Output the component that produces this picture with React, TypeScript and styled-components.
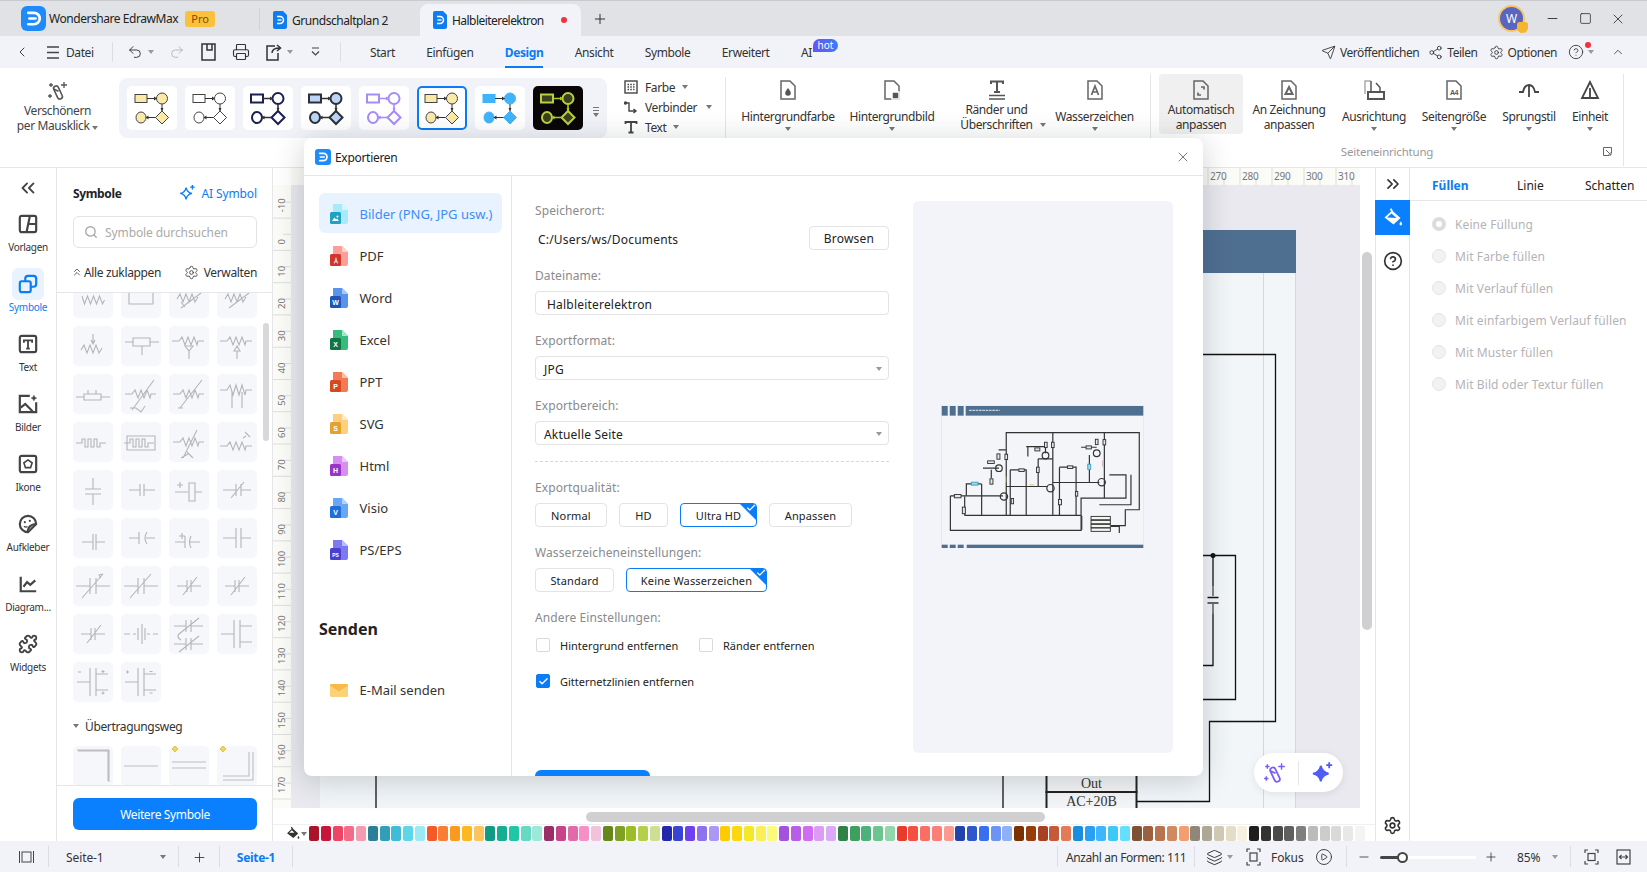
import React from "react";
import styled, { createGlobalStyle } from "styled-components";
import { ChevronLeft, Undo2, Redo2, Printer, Send, Share2, Settings, CircleHelp, ChevronUp, Minus, Square, X, Plus, Search, Layers, ChevronsLeft, ChevronsRight, ChevronsUp, Check, Puzzle, CirclePlay } from "lucide-react";

const Global = createGlobalStyle`
  html, body { margin: 0; padding: 0; overflow: hidden; background: #fff; }
  body { font-family: "Noto Sans", "Open Sans", sans-serif; font-size: 12px; color: #222; }
  * { box-sizing: border-box; }
`;

const Page = styled.div`
  position: relative; width: 1647px; height: 872px; overflow: hidden;
  display: flex; flex-direction: column; background: #fff;
`;

/* ---------- Title bar ---------- */
const TitleBar = styled.header`
  height: 36px; flex: none; display: flex; align-items: center; background: #e1e2e6; padding-left: 21px;
  border-top: 1px solid #c9cacd;
`;
const AppBlock = styled.div`
  width: 239px; height: 22px; display: flex; align-items: center; border-right: 1px solid #d2d3d7;
`;
const AppName = styled.span`margin-left: 3px; white-space: nowrap; letter-spacing: -0.45px;`;
const ProBadge = styled.span`
  margin-left: 7px; width: 30px; height: 16px; border-radius: 3px; background: #fbc13c; color: #7a4e00;
  font-size: 11px; line-height: 16px; text-align: center;
`;
const DocTab = styled.div<{ $active?: boolean }>`
  height: 32px; margin-top: 3px; display: flex; align-items: center; gap: 5px; padding: 0 13px;
  width: ${p => (p.$active ? "161px" : "160px")};
  background: ${p => (p.$active ? "#f1f3f9" : "transparent")};
  border-radius: 8px 8px 0 0; white-space: nowrap;
  letter-spacing: ${p => (p.$active ? "-0.55px" : "-0.45px")};
`;
const UnsavedDot = styled.span`
  width: 6px; height: 6px; border-radius: 50%; background: #f0323c; margin-left: auto; margin-right: 1px;
`;
const NewTab = styled.div`margin-left: 11px; display: flex; color: #333;`;
const WindowArea = styled.div`
  margin-left: auto; display: flex; align-items: center; color: #333;
`;
const Avatar = styled.div`
  position: relative; width: 27px; height: 27px; border-radius: 50%; background: #5965c0; border: 2px solid #f6c766;
  color: #fff; font-size: 12px; display: flex; align-items: center; justify-content: center;
`;
const AvatarBadge = styled.span`
  position: absolute; right: -5px; bottom: -3px; width: 11px; height: 11px; background: #f5b62f; border-radius: 3px 3px 6px 6px;
`;
const WinBtn = styled.span<{ $ml: number }>`display: flex; margin-left: ${p => p.$ml}px;`;

/* ---------- Menu bar ---------- */
const MenuBar = styled.nav`
  height: 32px; flex: none; display: flex; align-items: center; background: #f1f3f9; color: #333;
`;
const QuickArea = styled.div`
  width: 343px; height: 100%; display: flex; align-items: center; padding-left: 14px; position: relative; letter-spacing: -0.4px;
`;
const QuickItem = styled.span<{ $ml?: number; $dim?: boolean }>`
  display: flex; align-items: center; margin-left: ${p => p.$ml ?? 0}px; color: ${p => (p.$dim ? "#b5b5b8" : "#333")}; white-space: nowrap;
`;
const VSep = styled.span<{ $ml: number; $h?: number }>`
  width: 1px; height: ${p => p.$h ?? 20}px; background: #dcdde2; margin-left: ${p => p.$ml}px; flex: none;
`;
const Caret = styled.span<{ $ml?: number; $c?: string }>`
  display: inline-block; width: 0; height: 0; border-left: 3px solid transparent; border-right: 3px solid transparent;
  border-top: 4px solid ${p => p.$c ?? "#777"}; margin-left: ${p => p.$ml ?? 0}px; flex: none;
`;
const MenuTabs = styled.div`
  height: 100%; display: flex; gap: 31.4px; padding-left: 27px; position: relative;
`;
const MenuTab = styled.div<{ $active?: boolean }>`
  position: relative; height: 100%; display: flex; align-items: center; white-space: nowrap; letter-spacing: -0.4px;
  color: ${p => (p.$active ? "#0a7cf5" : "#333")}; font-weight: ${p => (p.$active ? 700 : 400)};
  border-bottom: 2px solid ${p => (p.$active ? "#0a7cf5" : "transparent")}; border-top: 2px solid transparent;
`;
const HotBadge = styled.span`
  position: absolute; left: 12px; top: 1px; width: 25px; height: 13px; border-radius: 7px 7px 7px 0;
  background: linear-gradient(90deg, #6a52f5, #3a7cfb); color: #fff; font-size: 10px; line-height: 12px; text-align: center; letter-spacing: 0;
`;
const MenuRight = styled.div`
  margin-left: auto; display: flex; align-items: center; padding-right: 22px; white-space: nowrap; letter-spacing: -0.45px;
`;
const MenuAction = styled.span<{ $ml: number }>`
  display: flex; align-items: center; gap: 4px; margin-left: ${p => p.$ml}px; position: relative;
`;
const RedDot = styled.span`
  position: absolute; left: 17px; top: -2px; width: 6px; height: 6px; border-radius: 50%; background: #f0323c;
`;

/* ---------- Ribbon ---------- */
const Ribbon = styled.section`
  height: 100px; flex: none; display: flex; background: #fff; border-bottom: 1px solid #e6e6e8; color: #333;
  letter-spacing: -0.4px;
`;
const MagicButton = styled.div`
  width: 119px; display: flex; flex-direction: column; align-items: center; padding: 12px 4px 0 0; color: #444;
  text-align: center; line-height: 15px;
  & > svg { margin-bottom: 1px; }
`;
const Gallery = styled.div`
  width: 488px; height: 60px; margin-top: 10px; padding: 8px 0 0 8px; display: flex; gap: 8px;
  background: #f1f3f9; border-radius: 8px; position: relative;
`;
const ThumbBox = styled.div<{ $selected?: boolean; $bg: string }>`
  width: 50px; height: 44px; border-radius: 5px; background: ${p => p.$bg}; overflow: hidden; flex: none;
  box-shadow: ${p => (p.$selected ? "inset 0 0 0 2px #0a7cf5" : "none")};
  & > svg { display: block; }
`;
const GalleryMore = styled.div`
  width: 10px; display: flex; flex-direction: column; align-items: center; justify-content: center; gap: 2px;
`;
const GalleryBar = styled.span`width: 6px; height: 1px; background: #777;`;
const QuickList = styled.div`
  width: 119px; padding: 0 0 0 17px; display: flex; flex-direction: column; border-right: 1px solid #e6e6e8; height: 61px; margin-top: 9px;
`;
const QuickRow = styled.div`
  height: 20px; flex: none; display: flex; align-items: center; gap: 7px; white-space: nowrap; color: #333;
`;
const RibbonGroupA = styled.div`
  width: 424px; display: flex; padding: 6px 0 0 11px; height: 66px;
`;
const RibbonGroupB = styled.div`
  width: 474px; height: 92px; border-left: 1px solid #e6e6e8; border-right: 1px solid #e6e6e8;
  margin-top: 6px; display: flex; flex-direction: column; padding-left: 8px;
`;
const RibbonRow = styled.div`display: flex; height: 60px;`;
const RibbonItem = styled.div<{ $w: number; $hl?: boolean }>`
  width: ${p => p.$w}px; height: 60px; border-radius: 4px; background: ${p => (p.$hl ? "#f0f0f0" : "transparent")};
  display: flex; flex-direction: column; align-items: center; text-align: center; padding-top: 6px; flex: none; line-height: 15px;
  position: relative;
`;
const RibbonIconBox = styled.div`height: 20px; display: flex; align-items: center; justify-content: center; margin-bottom: 2px;`;
const RibbonLabel = styled.div<{ $two: boolean }>`
  height: 30px; display: flex; flex-direction: column; justify-content: center; align-items: center; white-space: nowrap;
  padding-bottom: ${p => (p.$two ? 0 : 2)}px;
`;
const RibbonCaret = styled.span`
  margin-top: -5px; display: flex;
`;
const SideCaret = styled.span`
  position: absolute; right: 2px; bottom: 7px; display: flex;
`;
const RibbonFooter = styled.div`
  display: grid; grid-template-columns: 1fr auto 1fr; align-items: center; height: 18px; margin-top: 8px; color: #999; font-size: 11.5px; margin-left: -8px; letter-spacing: -0.2px;
`;
const FooterLabel = styled.span`grid-column: 2;`;
const FooterIcon = styled.span`grid-column: 3; justify-self: end; margin-right: 11px; display: flex;`;

/* ---------- Main ---------- */
const Main = styled.div`flex: 1; min-height: 0; display: flex;`;
const NavRail = styled.aside`
  width: 57px; flex: none; border-right: 1px solid #e6e6e8; display: flex; flex-direction: column; align-items: center;
`;
const NavCollapse = styled.div`height: 40px; display: flex; align-items: center; color: #444;`;
const NavItem = styled.div<{ $active?: boolean }>`
  height: 60px; width: 57px; display: flex; flex-direction: column; align-items: center; color: ${p => (p.$active ? "#0a7cf5" : "#333")};
  font-size: 10px; letter-spacing: -0.3px; line-height: 14px;
`;
const NavIcon = styled.div<{ $active?: boolean }>`
  width: 32px; height: 32px; border-radius: 6px; background: ${p => (p.$active ? "#e8f3ff" : "transparent")};
  display: flex; align-items: center; justify-content: center; color: ${p => (p.$active ? "#0a7cf5" : "#444")};
`;

const SymbolPanel = styled.aside`
  width: 216px; flex: none; display: flex; flex-direction: column; border-right: 1px solid #e6e6e8; position: relative; letter-spacing: -0.35px;
`;
const PanelHead = styled.div`
  height: 125px; flex: none; padding: 14px 15px 0 16px; border-bottom: 1px solid #e6e6e8;
`;
const PanelTitleRow = styled.div`display: flex; justify-content: space-between; align-items: center; height: 22px;`;
const PanelTitle = styled.span`font-weight: 700; font-size: 12px;`;
const AiSymbol = styled.span`display: flex; align-items: center; gap: 5px; color: #0a7cf5; letter-spacing: -0.1px;`;
const SearchBox = styled.div`
  margin-top: 12px; height: 32px; border: 1px solid #e3e3e6; border-radius: 6px; display: flex; align-items: center; gap: 7px;
  padding-left: 10px; color: #aaa; letter-spacing: -0.1px;
`;
const PanelTools = styled.div`
  margin-top: 15px; display: flex; justify-content: space-between; align-items: center; color: #333; height: 18px;
`;
const PanelTool = styled.span`display: flex; align-items: center; gap: 3px;`;
const ChevronGap = styled.span`display: flex; margin-left: -2px; margin-right: -2px;`;
const GearGap = styled.span`display: flex; margin-right: 2px;`;
const PanelScroll = styled.div`flex: 1; overflow: hidden; padding: 0 16px; position: relative;`;
const SymbolGrid = styled.div<{ $mt: number }>`
  display: grid; grid-template-columns: repeat(4, 40px); gap: 8px; margin-top: ${p => p.$mt}px;
`;
const SymbolThumb = styled.div`
  width: 40px; height: 40px; border-radius: 5px; background: #f6f7fb; overflow: hidden;
  & > svg { display: block; }
`;
const GroupHead = styled.div`
  margin-top: 16px; display: flex; align-items: center; gap: 6px; height: 16px; color: #333;
`;
const PanelScrollThumb = styled.span`
  position: absolute; right: 3px; top: 30px; width: 6px; height: 118px; border-radius: 3px; background: #d8d8da;
`;
const PanelFoot = styled.div`
  height: 56px; flex: none; padding: 12px 15px 12px 16px; border-top: 1px solid #e6e6e8;
`;
const PrimaryButton = styled.div`
  height: 32px; border-radius: 6px; background: #0a80ff; color: #fff; display: flex; align-items: center; justify-content: center;
`;

const CanvasArea = styled.div`flex: 1; min-width: 0; display: flex; flex-direction: column;`;
const TopRuler = styled.div`
  height: 17px; flex: none; margin-left: 18px; margin-right: 15px; background: #fbfbf7; overflow: hidden;
  & > svg { display: block; }
`;
const CanvasMiddle = styled.div`flex: 1; min-height: 0; display: flex;`;
const LeftRuler = styled.div`
  width: 18px; flex: none; background: #fbfbf7; overflow: hidden;
  & > svg { display: block; }
`;
const Viewport = styled.div`
  flex: 1; min-width: 0; position: relative; background: #e9e9ef; overflow: hidden;
`;
const CanvasDrawing = styled.svg`position: absolute; left: 0; top: 0;`;
const AiFloat = styled.div`
  position: absolute; left: 963px; top: 568px; width: 89px; height: 39px; border-radius: 20px; background: #fff;
  display: flex; align-items: center; justify-content: space-around; padding: 0 4px;
  box-shadow: 0 2px 8px rgba(0,0,0,.08);
`;
const AiSep = styled.span`width: 1px; height: 24px; background: #e6e6e8;`;
const VGutter = styled.div`width: 15px; flex: none; padding: 67px 3px 0 2px;`;
const VThumb = styled.div`height: 378px; width: 10px; border-radius: 5px; background: #d0d0d2;`;
const HGutter = styled.div`height: 16px; flex: none; padding: 4px 0 0 313px;`;
const HThumb = styled.div`width: 459px; height: 10px; border-radius: 5px; background: #d0d0d2;`;
const PaletteRow = styled.div`
  height: 17px; flex: none; display: flex; align-items: flex-start; border-top: 1px solid #f0f0f2; padding: 1px 0 0 13px;
`;
const PaletteIcon = styled.span`width: 23px; display: flex; align-items: center; gap: 1px; flex: none; color: #444;`;
const Swatch = styled.span<{ $c: string }>`
  width: 10px; height: 15px; margin-right: 1.76px; border-radius: 2px; background: ${p => p.$c}; flex: none;
`;

const RightRail = styled.div`
  width: 35px; flex: none; border-left: 1px solid #e6e6e8; border-right: 1px solid #e6e6e8; display: flex; flex-direction: column; align-items: center;
`;
const RailCollapse = styled.div`height: 32px; display: flex; align-items: center; color: #333;`;
const RailActive = styled.div`
  width: 35px; height: 35px; flex: none; margin-left: -1px; margin-right: -1px; background: #0a80ff; display: flex; align-items: center; justify-content: center;
`;
const RailHelp = styled.div`margin-top: 16px; display: flex; color: #333;`;
const RailGear = styled.div`margin-top: auto; margin-bottom: 6px; display: flex; color: #333;`;
const PropsPanel = styled.aside`width: 237px; flex: none; display: flex; flex-direction: column;`;
const PropsTabs = styled.div`
  height: 33px; flex: none; display: flex; border-bottom: 1px solid #e6e6e8; align-items: center; padding: 2px 0 0 22px; color: #222;
`;
const PropsTab = styled.span<{ $active?: boolean; $w: number }>`
  width: ${p => p.$w}px; color: ${p => (p.$active ? "#0a7cf5" : "#222")}; font-weight: ${p => (p.$active ? 700 : 400)};
`;
const RadioList = styled.div`padding: 12px 0 0 22px; display: flex; flex-direction: column; gap: 10px;`;
const RadioRow = styled.div`
  height: 22px; display: flex; align-items: center; gap: 9px; color: #b5b3b8; letter-spacing: 0.1px; white-space: nowrap;
`;
const RadioDot = styled.span<{ $on?: boolean }>`
  width: 14px; height: 14px; border-radius: 50%; flex: none; background: ${p => (p.$on ? "#fff" : "#f2f2f3")};
  border: ${p => (p.$on ? "4px solid #dcdcde" : "1px solid #e5e5e7")};
`;

/* ---------- Status bar ---------- */
const StatusBar = styled.footer`
  height: 31px; flex: none; display: flex; align-items: center; background: #f1f3f9; color: #333; letter-spacing: -0.1px;
`;
const StatusCell = styled.div<{ $w: number; $pl?: number; $jc?: string; $last?: boolean }>`
  width: ${p => p.$w}px; height: 21px; border-right: ${p => (p.$last ? "0" : "1px solid #dcdde2")}; display: flex; align-items: center; flex: none; padding: 1px 0 0 ${p => p.$pl ?? 0}px;
  justify-content: ${p => p.$jc ?? "flex-start"};
  white-space: nowrap;
`;
const StatusCurrent = styled.span`color: #0a7cf5; font-weight: 700; letter-spacing: -0.3px;`;
const StatusCount = styled.span`letter-spacing: -0.42px;`;
const StatusSpacer = styled.div`flex: 1; height: 21px; border-right: 1px solid #dcdde2;`;
const StatusGap = styled.span<{ $w: number }>`width: ${p => p.$w}px; flex: none;`;
const ZoomTrack = styled.span`
  position: relative; width: 96px; height: 3px; background: #fff; border-radius: 2px; flex: none;
`;
const ZoomFill = styled.span`position: absolute; left: 0; top: 0; height: 3px; width: 23px; background: #444; border-radius: 2px;`;
const ZoomKnob = styled.span`
  position: absolute; left: 17px; top: -4px; width: 11px; height: 11px; border-radius: 50%; background: #fff; border: 2px solid #444;
`;

/* ---------- Dialog ---------- */
const Dialog = styled.div`
  position: absolute; left: 304px; top: 138px; width: 899px; height: 638px; background: #fff; border-radius: 8px;
  box-shadow: 0 4px 30px rgba(30,40,50,.22); overflow: hidden; display: flex; flex-direction: column;
`;
const DialogHead = styled.div`
  height: 38px; flex: none; border-bottom: 1px solid #e6e6e8; display: flex; align-items: center; padding: 1px 12px 0 11px; gap: 4px;
  letter-spacing: -0.3px;
`;
const DialogClose = styled.span`margin-left: auto; display: flex; color: #555;`;
const DialogBody = styled.div`flex: 1; min-height: 0; display: flex;`;
const ExportList = styled.div`
  width: 208px; flex: none; border-right: 1px solid #e6e6e8; padding: 17px 9px 0 15px; display: flex; flex-direction: column; gap: 2px;
`;
const ExportItem = styled.div<{ $active?: boolean }>`
  height: 40px; flex: none; border-radius: 6px; display: flex; align-items: center; gap: 11.5px; padding: 1px 0 0 11px; white-space: nowrap;
  font-size: 13px; background: ${p => (p.$active ? "#e8f3ff" : "transparent")}; color: ${p => (p.$active ? "#3f8cf7" : "#333")};
`;
const SendHead = styled.div`font-size: 16px; font-weight: 700; color: #222; margin-top: 46px; height: 24px; line-height: 24px;`;
const SendItem = styled(ExportItem)`margin-top: 26px;`;
const FormCol = styled.div`
  width: 377px; flex: none; padding: 26px 0 0 23px;
`;
const FieldLabel = styled.div<{ $mt?: number }>`
  height: 16px; line-height: 18px; color: #8a8a8e; letter-spacing: 0.1px; margin-top: ${p => p.$mt ?? 0}px;
`;
const PathRow = styled.div`
  margin-top: 8px; height: 24px; display: flex; align-items: center; justify-content: space-between; padding-left: 3px; letter-spacing: 0.2px;
`;
const PathText = styled.span`padding-top: 2px;`;
const Ghost = styled.div`
  width: 80px; height: 24px; border: 1px solid #e3e3e6; border-radius: 4px; display: flex; align-items: center; justify-content: center; letter-spacing: 0.2px; padding-top: 1px;
`;
const TextField = styled.div`
  margin-top: 8px; height: 24px; border: 1px solid #e3e3e6; border-radius: 4px; display: flex; align-items: center; padding: 2px 0 0 11px; letter-spacing: 0.2px;
`;
const SelectField = styled(TextField)`
  padding: 2px 6px 0 8px; justify-content: space-between;
`;
const DashLine = styled.div`margin-top: 16px; border-top: 1px dashed #d8d8da; height: 1px;`;
const ChoiceRow = styled.div`display: flex; gap: 12px; margin-top: 8px;`;
const Choice = styled.div<{ $active?: boolean; $w: number }>`
  position: relative; width: ${p => p.$w}px; height: 24px; border-radius: 4px; overflow: hidden; font-size: 11px; padding-top: 1px;
  border: 1px solid ${p => (p.$active ? "#0a7cf5" : "#e3e3e6")}; display: flex; align-items: center; justify-content: center; letter-spacing: 0.15px; white-space: nowrap;
  &::after {
    content: ""; display: ${p => (p.$active ? "block" : "none")}; position: absolute; right: -1px; top: -1px; width: 0; height: 0;
    border-top: 18px solid #0a7cf5; border-left: 18px solid transparent;
  }
`;
const ChoiceTick = styled.span`position: absolute; right: 0; top: -1px; z-index: 1; display: flex; color: #fff;`;
const CheckRow = styled.div<{ $mt: number }>`
  margin-top: ${p => p.$mt}px; height: 14px; display: flex; align-items: center; padding-left: 1px; font-size: 11px; letter-spacing: 0;
`;
const CheckItem = styled.span<{ $w?: number }>`
  display: flex; align-items: center; gap: 10px; white-space: nowrap; width: ${p => (p.$w ? `${p.$w}px` : "auto")};
`;
const CheckBox = styled.span<{ $on?: boolean }>`
  width: 14px; height: 14px; border-radius: 2px; flex: none; display: flex; align-items: center; justify-content: center; color: #fff;
  background: ${p => (p.$on ? "#0a7cf5" : "#fff")}; border: 1px solid ${p => (p.$on ? "#0a7cf5" : "#d9d9dc")};
`;
const ExportButton = styled.div`
  margin-top: 82px; width: 115px; height: 32px; border-radius: 6px; background: #0a80ff;
`;
const PreviewPane = styled.div`
  width: 260px; height: 552px; margin: 25px 0 0 24px; border-radius: 6px; background: #f2f4f9; flex: none;
  display: flex; align-items: center; justify-content: center;
`;
const PreviewSvg = styled.svg`
  display: block; filter: blur(0.45px); margin: -2px 2px 0 0;
`;

/* ---------- Data ---------- */
const Logo = ({ s = 16, r = 4 }: { s?: number; r?: number }) => (
  <svg width={s} height={s} viewBox="0 0 24 24" style={{ flex: "none" }}>
    <rect width="24" height="24" rx={r * 24 / s} fill="#1f8bfa" />
    <path d="M7 6.500h5.500a5.500 5.500 0 0 1 0 11H7" fill="none" stroke="#fff" strokeWidth="2.600" strokeLinecap="round" />
    <path d="M8 12h6" stroke="#fff" strokeWidth="2.400" strokeLinecap="round" />
  </svg>
);
const DocLogo = () => (
  <svg width="14" height="18" viewBox="0 0 14 18" style={{ flex: "none" }}>
    <path d="M2 0h8l4 4v12a2 2 0 0 1-2 2H2a2 2 0 0 1-2-2V2a2 2 0 0 1 2-2z" fill="#0f7df2" />
    <path d="M4 5.500h3a3.500 3.500 0 0 1 0 7H4" fill="none" stroke="#fff" strokeWidth="1.500" />
    <path d="M4.500 9h4" stroke="#fff" strokeWidth="1.400" />
  </svg>
);

type Thumb = { bg: string; fill: string; stroke: string; sw: number; line: string; sel?: boolean };
const thumbs: Thumb[] = [
  { bg: "#fff", fill: "#fbe9a8", stroke: "#444", sw: 1, line: "#333" },
  { bg: "#fff", fill: "#fff", stroke: "#444", sw: 1, line: "#333" },
  { bg: "#fff", fill: "#fff", stroke: "#1a2050", sw: 2, line: "#333" },
  { bg: "#fff", fill: "#bcd4f5", stroke: "#2c2f38", sw: 2, line: "#333" },
  { bg: "#fff", fill: "#fff", stroke: "#a78bfa", sw: 2, line: "#a78bfa" },
  { bg: "#fff", fill: "#fbe9a8", stroke: "#444", sw: 1, line: "#333", sel: true },
  { bg: "#fff", fill: "#40b4fa", stroke: "#40b4fa", sw: 1, line: "#333" },
  { bg: "#0a0608", fill: "#3a4020", stroke: "#b8d040", sw: 2, line: "#a8d010" },
];
const FlowThumb = ({ t }: { t: Thumb }) => (
  <svg width="50" height="44" viewBox="0 0 50 44">
    <g fill={t.fill} stroke={t.stroke} strokeWidth={t.sw}>
      <rect x="8" y="8.500" width="12" height="8" />
      <circle cx="35" cy="12.500" r="5.500" />
      <ellipse cx="14" cy="31.500" rx="5" ry="5.500" />
      <path d="M35 25l6.500 6.500L35 38l-6.500-6.500z" />
    </g>
    <g stroke={t.line} strokeWidth={t.sw >= 2 ? 1.6 : 1} fill={t.line}>
      <path d="M20 12.500h9.500M35 18v7M28.500 31.500H19" fill="none" />
      <path d="M27 10.500l3 2-3 2zM33.500 22h3L35 25zM21.500 29.500l-3 2 3 2z" stroke="none" />
    </g>
  </svg>
);

const Sq = "M3 21h6v-4h3v8h3v-8h3v8h3v-8h3v8h3v-4h6";
const capSlash = "M3 20h14M17 12v16M23 12v16M23 20h14M9 32L30 8";
const symbolRows: string[] = [
  "M9 18l2.500 8 3-8 3 8 3-8 3 8 3-8 3 8 2-4", "M8 8h24v18H8z", "M8 21l3-5 3 8 3-8 3 8 3-8 3 8 3-5M12 30L32 15M12 24l4 5", "M8 21l3-5 3 8 3-8 3 8 3-8 3 8 3-5M12 30L32 15",
  "M8 24l3-5 3 8 3-8 3 8 3-8 3 8 3-5M20 8v9M18 14l2 4 2-4", "M4 16h8M12 12h17v8H12zM29 16h9M21 20v9", "M3 15h7l3-4 3 8 3-8 3 8 3-8 3 8 1-4h6M16 20l4 5 4-5zM20 25v8", "M3 15h7l3-4 3 8 3-8 3 8 3-8 3 8 1-4h6M17 25l3-5 3 5zM20 25v8",
  "M3 23h8M11 20h17v6H11zM28 23h9M15 20v-4M23 20v-4", "M4 20h7l3-4 3 8 3-8 3 8 3-8 3 8 1-4h5M33 6L11 36M9 34h6l5 4 4-6", "M4 20h7l3-4 3 8 3-8 3 8 3-8 3 8 1-4h5M33 6L11 34M9 34h5", "M3 16h7l3-5 3 10 3-10 3 10 3-10 3 10 1-5h6M15 18v16M25 18v16",
  Sq, `${Sq}M6 14h28v14H6z`, "M4 20h7l3-4 3 8 3-8 3 8 3-8 3 8 1-4h5M28 8L14 36M12 36l7-4M18 30l6 6", "M3 24h7l3-4 3 8 3-8 3 8 3-8 3 8 1-4h6M28 10l3 3M33 15l-3-3M26 16l3-2",
  "M20 8v11M12 19h16M12 24h16M20 24v11", "M8 20h11M19 14v12M23 14v12M23 20h11", "M6 22h13M33 22H26M20 13h6v18h-6zM8 15h6M11 12v6", "M6 20h13M19 14v12M24 14v12M24 20h10M14 28l13-16",
  "M9 24h11M32 24H23M20 16v16M23 16v16", "M8 20h10M18 14v12M26 14q-4 6 0 12M25 20h9", "M6 24h10M16 18v12M22 18q-3 6 0 12M21 24h10M10 18h6M13 15v6", "M6 20h13M19 10v20M24 10v20M24 20h10",
  "M3 20h14M17 12v16M23 12v16M23 20h14M9 32L30 8M30 8l-4 1 2 3", capSlash, "M8 20h10M18 14v12M22 14v12M22 20h10M14 29L28 11", "M8 20h10M18 14v12M22 14v12M22 20h10M14 29L28 11",
  "M8 20h10M18 14v12M22 14v12M22 20h10M14 29L28 11", "M3 20h6M12 20h3M17 14v12M21 10v20M24 14v12M26 20h3M32 20h5", "M5 12h12M17 6v12M22 6v12M22 12h12M10 20L30 4M5 30h12M17 24v12M22 24v12M22 30h12M10 38L30 22M10 20q-3 3 2 6", "M4 20h13M17 6v28M23 6v28M23 12h12M23 28h12",
  "M4 20h13M17 6v28M23 6v28M23 12h12M23 28h12M5 10h3M30 8v3M28.500 9.500h3M28.500 31h3M30 29.500v3", "M4 20h13M17 6v28M23 6v28M23 12h12M23 28h12M5 10h3M6.500 8.500v3M28.500 9.500h3M28.500 31h3",
];
const pathRow: string[] = [
  "M4 4h32v32M5 5h30v30", "M3 20h34", "M3 16h34M3 22h34", "M6 34h30V6M6 30h26V6",
];
const swatches = [
  "#a9142b","#c9143c","#ee4466","#f56a88","#f59bb0","#2a7f96","#30a0b8","#3fbcd8","#5fd5e8","#9aeaf5",
  "#f45a28","#fa7d36","#fb9a1f","#fdb71f","#fdc45e","#129b82","#14ae90","#1fc7a6","#65d9c3","#9ce9d9",
  "#9b2d68","#c84488","#e26aa8","#f78fc6","#f2c2da","#66871a","#7fa022","#9bbd2a","#b4cf4a","#cfdf92",
  "#2128ad","#3a44d4","#7040f0","#8d72f0","#ad97f5","#fecb00","#fed610","#f4e826","#f8ef5a","#fafa7c",
  "#a352dd","#b75de8","#d06cf0","#dc9bf5","#dca8f8","#2f8149","#3da05e","#4db27a","#6cc48f","#93d6ab",
  "#ea3a2c","#f34f42","#fb6e63","#fc7f77","#fd9a92","#2244aa","#2c58cc","#3a6ef0","#6c94f5","#8fb0f5",
  "#7a3000","#973d0a","#a84124","#c45a39","#e27b58","#1a8ede","#2aa0f5","#3fb5fc","#3dc8f5","#62e0fe",
  "#7e5134","#9a6040","#b8734f","#d08a60","#f49d6e","#90877a","#aea793","#cfc9b4","#e4dcc6","#f5f0df",
  "#1e1e1e","#333333","#4a4a4a","#5f5f5f","#7f7f7f","#bbbbbb","#cccccc","#d9d9d9","#e8e8e8","#f4f4f4","#ffffff",
];

const FileIcon = ({ a, b, c, l }: { a: string; b: string; c: string; l: string }) => (
  <svg width="18" height="20" viewBox="0 0 18 20" style={{ flex: "none" }}>
    <path d="M3 0h9l6 6v12a2 2 0 0 1-2 2H3z" fill={a} />
    <path d="M12 0l6 6h-6z" fill={b} />
    <rect x="0" y="8" width="11" height="12" rx="1.500" fill={c} />
    {l === "img"
      ? <path d="M2 17l2.500-3.500 1.500 2 1-1 2 2.500zM7.500 11.500a1 1 0 1 0 .01 0z" fill="#fff" />
      : <text x="5.500" y="17" textAnchor="middle" fontSize={l.length > 1 ? 5 : 7} fontWeight="700" fill="#fff" fontFamily="Liberation Sans, sans-serif">{l}</text>}
  </svg>
);
const formats = [
  { n: "Bilder (PNG, JPG usw.)", a: "#a8eafa", b: "#d5f6fd", c: "#1aa3c4", l: "img", active: true },
  { n: "PDF", a: "#fb9f9a", b: "#fdd2cf", c: "#d1352b", l: "⅄" },
  { n: "Word", a: "#5a93ea", b: "#a8c8f6", c: "#1c56b8", l: "W" },
  { n: "Excel", a: "#36bb7c", b: "#a8e6c8", c: "#107443", l: "X" },
  { n: "PPT", a: "#f27a55", b: "#f9bda8", c: "#d84820", l: "P" },
  { n: "SVG", a: "#fdcf7e", b: "#fee8c2", c: "#e5a22a", l: "S" },
  { n: "Html", a: "#d48ff0", b: "#eccaf8", c: "#9a33c8", l: "H" },
  { n: "Visio", a: "#6aa6f5", b: "#b5d3fa", c: "#1e6fdc", l: "V" },
  { n: "PS/EPS", a: "#7d79ee", b: "#bcbaf7", c: "#4b3fd0", l: "PS" },
];

const Doc = ({ children }: { children?: React.ReactNode }) => (
  <svg width="18" height="20" viewBox="0 0 18 20" fill="none" stroke="#666" strokeWidth="1.500">
    <path d="M2 1h9l5 5v13H2z" />
    {children}
  </svg>
);
const Ic = {
  Hfarbe: () => <Doc><path d="M9 8c2 2.600 2.800 3.800 2.800 5a2.800 2.800 0 0 1-5.600 0c0-1.200.8-2.400 2.800-5z" fill="#555" stroke="none" /></Doc>,
  Hbild: () => <Doc><path d="M9 12h7v7H9z" fill="#555" stroke="#fff" /></Doc>,
  Rand: () => (
    <svg width="18" height="20" viewBox="0 0 18 20" fill="none" stroke="#555"><path d="M3 4V1.500h12V4M9 2v10M6 12h6" strokeWidth="2" /><path d="M1 15.500h16M1 19h16" strokeWidth="1.500" /></svg>
  ),
  Wasser: () => <Doc><path d="M5.500 15L9 6l3.500 9M6.800 12h4.400" strokeWidth="1.700" /></Doc>,
  Auto: () => <Doc><path d="M6 12.500v2.500h3M12 9.500V7H9" strokeWidth="1.700" /></Doc>,
  Zeich: () => <Doc><path d="M9 7l3.500 7h-7z" strokeWidth="2" /></Doc>,
  Ausr: () => (
    <svg width="22" height="20" viewBox="0 0 22 20" fill="none" stroke="#555" strokeWidth="1.500"><path d="M2 14V1h6" stroke="#aaa" /><path d="M8 1v10M13 3l4 4.500V11" /><rect x="5" y="12" width="16" height="7" strokeWidth="2" /></svg>
  ),
  Groesse: () => (
    <Doc><text x="9" y="15" textAnchor="middle" fontSize="7" fontWeight="700" fill="#555" stroke="none" fontFamily="Liberation Sans">A4</text></Doc>
  ),
  Sprung: () => (
    <svg width="22" height="20" viewBox="0 0 22 20" fill="none" stroke="#444" strokeWidth="1.800"><path d="M1 12h4c1-5 3.500-7 6-7s5 2 6 7h4M11 5v12" /></svg>
  ),
  Einheit: () => (
    <svg width="20" height="20" viewBox="0 0 20 20" fill="none" stroke="#444" strokeWidth="1.800"><path d="M10 2L2 18h16zM10 8v10" /></svg>
  ),
  Wand: ({ c = "#555", s = 22 }: { c?: string; s?: number }) => (
    <svg width={s} height={s} viewBox="0 0 22 22" fill="none" stroke={c} strokeWidth="1.600">
      <rect x="-2.500" y="-7" width="5" height="14" rx="2.500" transform="translate(11 12.500) rotate(-25)" />
      <path d="M6.500 9l5 2.300" />
      <path d="M17 2v6M14 5h6M4 3v4M2 5h4M3 14v4M1 16h4" strokeWidth="1.300" />
    </svg>
  ),
  Spark: ({ c = "#0a7cf5", s = 16, f = false }: { c?: string; s?: number; f?: boolean }) => (
    <svg width={s} height={s} viewBox="0 0 20 20" fill={f ? c : "none"} stroke={c} strokeWidth="1.500">
      <path d="M9 4c.8 4 2.500 5.800 6.500 6.500-4 .8-5.800 2.500-6.500 6.500-.8-4-2.500-5.800-6.500-6.500 4-.8 5.800-2.500 6.500-6.500z" />
      <path d="M16 1v5M13.500 3.500h5" />
    </svg>
  ),
  Vorlagen: () => (
    <svg width="20" height="20" viewBox="0 0 22 22" fill="none" stroke="#444" strokeWidth="2.400"><rect x="2" y="2" width="18" height="18" rx="2" /><path d="M13 2.500L9.500 19.500M11.500 11H19.500" /></svg>
  ),
  Symbole: () => (
    <svg width="20" height="20" viewBox="0 0 22 22" fill="none" stroke="#0a7cf5" strokeWidth="2.400"><rect x="2" y="8" width="12" height="12" rx="2" /><path d="M8 8V5a3 3 0 0 1 3-3h6a3 3 0 0 1 3 3v6a3 3 0 0 1-3 3h-3" /></svg>
  ),
  TextNav: () => (
    <svg width="20" height="20" viewBox="0 0 22 22" fill="none" stroke="#444" strokeWidth="2.400"><rect x="2" y="2" width="18" height="18" rx="2" /><path d="M6.500 9.500V7h9v2.500M11 7v9M9 16h4" strokeWidth="2" /></svg>
  ),
  Bilder: () => (
    <svg width="20" height="20" viewBox="0 0 22 22" fill="none" stroke="#444" strokeWidth="2.400"><path d="M13 2H2v18h18V9" /><path d="M3 15l5-4 8 8" /><path d="M17.500 1.500l1 2 2 1-2 1-1 2-1-2-2-1 2-1z" fill="#444" strokeWidth=".6" /></svg>
  ),
  Ikone: () => (
    <svg width="20" height="20" viewBox="0 0 22 22" fill="none" stroke="#444" strokeWidth="2.400"><rect x="2" y="2" width="18" height="18" rx="2" /><path d="M11 6.500l4.500 3.300-1.700 5.200H8.200L6.500 9.800z" strokeWidth="1.800" /></svg>
  ),
  Sticker: () => (
    <svg width="20" height="20" viewBox="0 0 22 22" fill="none" stroke="#444" strokeWidth="2.400"><path d="M11 20a9 9 0 1 1 9-9l-9 9z" /><path d="M10.500 20c0-5 4-9 9-9" /><circle cx="7.500" cy="9" r="1.200" fill="#444" stroke="none" /><circle cx="13" cy="7.500" r="1.200" fill="#444" stroke="none" /><path d="M6.500 13.500c1.200 1 2.500 1.200 4 .5" strokeWidth="1.500" /></svg>
  ),
  Chart: () => (
    <svg width="20" height="20" viewBox="0 0 22 22" fill="none" stroke="#444" strokeWidth="2.400"><path d="M3 3v16h17" /><path d="M6 14l4-5 3.500 3L19 7" /></svg>
  ),
  Paint: () => (
    <svg width="20" height="20" viewBox="0 0 20 20" fill="#fff"><path d="M7 1l1.400-.8 2 3.500L17.500 10l-7 6.500L1.500 9.500 8 3.600z" /><path d="M4 9.500l4.500-4 5 4.500z" fill="#0a80ff" /><path d="M17.800 13.500c.9 1.300 1.300 2 1.300 2.600a1.300 1.300 0 0 1-2.600 0c0-.6.4-1.300 1.300-2.600z" /></svg>
  ),
  PaintDark: () => (
    <svg width="14" height="15" viewBox="0 0 20 20" fill="#333"><path d="M7 1l1.400-.8 2 3.500L17.500 10l-7 6.500L1.500 9.500 8 3.600z" /><path d="M4.500 9l4-3.500 3.500 3.500z" fill="#fff" /><path d="M17.800 13.500c.9 1.300 1.300 2 1.300 2.600a1.300 1.300 0 0 1-2.600 0c0-.6.4-1.300 1.300-2.600z" /></svg>
  ),
  Save: () => (
    <svg width="15" height="18" viewBox="0 0 15 18" fill="none" stroke="#333" strokeWidth="1.500"><path d="M1 1h13v16H1zM6 1v6h5V1" /></svg>
  ),
  ExportI: () => (
    <svg width="16" height="18" viewBox="0 0 16 18" fill="none" stroke="#333" strokeWidth="1.500"><path d="M9 3H1v14h11v-7" /><path d="M6 10c0-3 2-5 8-5M11 2l3.500 3L11 8" /></svg>
  ),
  More: () => (
    <svg width="9" height="10" viewBox="0 0 9 10" fill="none" stroke="#444" strokeWidth="1.200"><path d="M1 1h7M1 4.500l3.500 3.500L8 4.500" /></svg>
  ),
  Hamburger: () => (
    <svg width="14" height="13" viewBox="0 0 14 13" stroke="#444" strokeWidth="1.300"><path d="M1 1h12M1 6.500h12M1 12h12" /></svg>
  ),
  Farbe: () => (
    <svg width="14" height="14" viewBox="0 0 14 14" fill="none" stroke="#444" strokeWidth="1.400"><rect x="1" y="1" width="12" height="12" /><path d="M3.500 4.500h7M3.500 7h7M3.500 9.500h7" strokeDasharray="1.500 1.300" /></svg>
  ),
  Verb: () => (
    <svg width="14" height="14" viewBox="0 0 14 14" fill="none" stroke="#444" strokeWidth="1.400"><path d="M1 3h4v8h6M9.500 9l2.500 2-2.500 2" /><circle cx="1.500" cy="3" r="1" fill="#444" /></svg>
  ),
  TextS: () => (
    <svg width="14" height="14" viewBox="0 0 14 14" fill="none" stroke="#444" strokeWidth="2"><path d="M1.500 4V2h11v2M7 2v10M4.500 12.500h5" strokeWidth="1.800" /></svg>
  ),
  SideToggle: () => (
    <svg width="15" height="12" viewBox="0 0 15 12" fill="none" stroke="#444"><path d="M.5 0v12M14.500 0v12" /><rect x="3" y="1" width="9" height="10" /></svg>
  ),
  Focus: () => (
    <svg width="15" height="18" viewBox="0 0 15 18" fill="none" stroke="#444" strokeWidth="1.200"><path d="M1 4V1h3M11 1h3v3M1 14v3h3M11 17h3v-3" /><rect x="4" y="5" width="7" height="8" /></svg>
  ),
  FitPage: () => (
    <svg width="15" height="16" viewBox="0 0 15 16" fill="none" stroke="#444" strokeWidth="1.200"><path d="M1 4V1h3M11 1h3v3M1 12v3h3M11 15h3v-3" /><rect x="4" y="4.500" width="7" height="7" /></svg>
  ),
  FitWidth: () => (
    <svg width="15" height="16" viewBox="0 0 15 16" fill="none" stroke="#444" strokeWidth="1.200"><rect x="1" y="1" width="13" height="14" /><path d="M4 8h7M5.500 6L3.500 8l2 2M9.500 6l2 2-2 2" /></svg>
  ),
  Expand: () => (
    <svg width="9" height="9" viewBox="0 0 9 9" fill="none" stroke="#666"><path d="M8.500 6V.5H.5v8H6" /><path d="M3 3l5 5M8 5v3H5" /></svg>
  ),
  Mail: () => (
    <svg width="18" height="18" viewBox="0 0 18 18" style={{ flex: "none" }}><rect y="3" width="18" height="13" rx="1.500" fill="#fbd277" /><path d="M0 4.500l9 6 9-6V4.500A1.500 1.500 0 0 0 16.500 3h-15A1.500 1.500 0 0 0 0 4.500z" fill="#f9b84a" /></svg>
  ),
};

const TopRulerDraw = () => (
  <svg width="1069" height="17">
    {Array.from({ length: 6 }).map((_, i) => (
      <g key={i} stroke="#dcdcdc">
        <path d={`M${917 + i * 32} 0v17M${933 + i * 32} 10v7`} />
      </g>
    ))}
    {[270, 280, 290, 300, 310].map((n, i) => (
      <text key={n} x={919 + i * 32} y="12" fontSize="10" fill="#777" letterSpacing="-0.2">{n}</text>
    ))}
  </svg>
);
const LeftRulerDraw = () => {
  const vals = [-10, 0, 10, 20, 30, 40, 50, 60, 70, 80, 90, 100, 110, 120, 130, 140, 150, 160, 170];
  return (
    <svg width="18" height="623">
      {vals.map((n, i) => {
        const y = 600 - (18 - i) * 32.27;
        return (
          <g key={n}>
            <path d={`M0 ${y + 14}h18M10 ${y - 2}h8`} stroke="#dedede" />
            <text transform={`translate(12 ${y + 8}) rotate(-90)`} fontSize="9.500" fill="#777">{n}</text>
          </g>
        );
      })}
    </svg>
  );
};

const CanvasLines = () => (
  <CanvasDrawing width="1069" height="623" viewBox="291 185 1069 623">
    <rect x="320" y="230" width="976" height="578" fill="#f2f6f9" />
    <rect x="320" y="230" width="976" height="43" fill="#4f6f91" />
    <path d="M1263.500 273v535M1295.500 273v535" stroke="#d4d8dc" fill="none" />
    <g fill="none" stroke="#111" strokeWidth="1.300">
      <path d="M1190 354.500h85.500V721.500H1209.500V801.500H1137" />
      <path d="M1190 555.500h45.500V699.500H1190" />
      <path d="M1213 555.500V586M1213 613V665.500H1190M376 770v38M1003 770v38" />
    </g>
    <circle cx="1213" cy="555.500" r="2.500" fill="#111" />
    <path d="M1213 586v10M1213 604v10" stroke="#777" strokeWidth="1.800" />
    <path d="M1207.500 597.500h11" stroke="#111" strokeWidth="1.500" />
    <path d="M1207.500 603h11" stroke="#666" strokeWidth="2" />
    <g fill="#f4f5f6" stroke="#222" strokeWidth="2">
      <rect x="1046.500" y="769" width="90" height="23" />
      <rect x="1046.500" y="792" width="90" height="22" />
    </g>
    <g fontFamily="'Liberation Serif', serif" fontSize="14" fill="#333" textAnchor="middle">
      <text x="1091.500" y="788">Out</text>
      <text x="1091.500" y="806">AC+20B</text>
    </g>
  </CanvasDrawing>
);

const Preview = () => (
  <PreviewSvg width="203" height="143" viewBox="65 45 608 430">
    <rect x="65" y="45" width="608" height="430" fill="#f3f5f9" stroke="#d8dce2" strokeWidth="1.500" />
    <g fill="#4f6f91">
      <rect x="66" y="48" width="18" height="29" /><rect x="90" y="48" width="18" height="29" /><rect x="114" y="48" width="18" height="29" /><rect x="138" y="48" width="534" height="29" />
      <rect x="66" y="465" width="18" height="10" /><rect x="90" y="465" width="18" height="10" /><rect x="114" y="465" width="18" height="10" /><rect x="141" y="465" width="531" height="10" />
    </g>
    <path d="M148 61h92" stroke="#c6d2de" strokeWidth="4" strokeDasharray="8 2" />
    <g fill="none" stroke="#333" strokeWidth="3.600">
      <path d="M260 377V128H660V360H618V408H575" />
      <path d="M400 128V378M555 128V325M92 318V422H485V325H620V255H570M92 318H250M135 377H485" />
      <path d="M185 282H140V318M186 282V377M272 240V377M272 240H320V377M260 290H385M356 207V290M356 207H400" />
      <path d="M420 232V377M420 232H470V377M400 278H540M510 195V278M487 378V420M540 345H635V255M575 410H600V430" />
      <path d="M135 320V377M237 180h22M320 170h58V190M485 172h47M190 235h48M215 265V240M325 170v30" />
      <circle cx="253" cy="320" r="11" /><circle cx="238" cy="235" r="10" /><circle cx="378" cy="197" r="10" />
      <circle cx="393" cy="295" r="11" /><circle cx="532" cy="190" r="10" /><circle cx="547" cy="277" r="11" />
    </g>
    <g fill="#e6e6e4" stroke="#333" strokeWidth="2.800">
      <rect x="104" y="314" width="20" height="10" /><rect x="128" y="352" width="9" height="20" /><rect x="204" y="213" width="20" height="8" />
      <rect x="211" y="267" width="9" height="16" /><rect x="298" y="237" width="16" height="8" /><rect x="232" y="192" width="9" height="16" />
      <rect x="256" y="193" width="8" height="16" /><rect x="346" y="174" width="15" height="9" /><rect x="375" y="157" width="8" height="16" />
      <rect x="396" y="157" width="8" height="16" /><rect x="351" y="232" width="8" height="16" /><rect x="444" y="228" width="16" height="8" />
      <rect x="417" y="329" width="9" height="16" /><rect x="500" y="168" width="16" height="9" /><rect x="528" y="148" width="8" height="16" />
      <rect x="551" y="149" width="8" height="16" /><rect x="275" y="326" width="7" height="16" /><rect x="468" y="305" width="7" height="14" />
    </g>
    <rect x="155" y="277" width="20" height="9" fill="#9ed5e8" stroke="#2c9fc4" strokeWidth="2.500" />
    <rect x="505" y="223" width="9" height="16" fill="#9ed5e8" stroke="#2c9fc4" strokeWidth="2.500" />
    <path d="M258 260v18" stroke="#ecc36c" strokeWidth="4" /><path d="M330 285h14" stroke="#ecc36c" strokeWidth="3" /><path d="M550 212v18" stroke="#e5a4b4" strokeWidth="3" />
    <g fill="#f5f5f2" stroke="#333" strokeWidth="2.800">
      <rect x="515" y="380" width="58" height="10" /><rect x="515" y="392" width="58" height="10" /><rect x="515" y="404" width="58" height="10" /><rect x="515" y="415" width="58" height="10" />
    </g>
  </PreviewSvg>
);

const ribbonA = [
  { w: 102, icon: <Ic.Hfarbe />, l: ["Hintergrundfarbe"] },
  { w: 106, icon: <Ic.Hbild />, l: ["Hintergrundbild"] },
  { w: 103, icon: <Ic.Rand />, l: ["Ränder und", "Überschriften"], side: true },
  { w: 93, icon: <Ic.Wasser />, l: ["Wasserzeichen"] },
];
const ribbonB = [
  { w: 84, icon: <Ic.Auto />, l: ["Automatisch", "anpassen"], hl: true },
  { w: 92, icon: <Ic.Zeich />, l: ["An Zeichnung", "anpassen"] },
  { w: 78, icon: <Ic.Ausr />, l: ["Ausrichtung"], caret: true },
  { w: 82, icon: <Ic.Groesse />, l: ["Seitengröße"], caret: true },
  { w: 68, icon: <Ic.Sprung />, l: ["Sprungstil"], caret: true },
  { w: 54, icon: <Ic.Einheit />, l: ["Einheit"], caret: true },
];
type RI = { w: number; icon: React.ReactNode; l: string[]; hl?: boolean; side?: boolean; caret?: boolean };
const RibbonCell = ({ it, showCaret }: { it: RI; showCaret: boolean }) => (
  <RibbonItem $w={it.w} $hl={it.hl}>
    <RibbonIconBox>{it.icon}</RibbonIconBox>
    <RibbonLabel $two={it.l.length > 1}>{it.l.map(t => <span key={t}>{t}</span>)}</RibbonLabel>
    {it.side ? <SideCaret><Caret /></SideCaret> : showCaret ? <RibbonCaret><Caret /></RibbonCaret> : null}
  </RibbonItem>
);

const navItems = [
  { l: "Vorlagen", i: <Ic.Vorlagen /> },
  { l: "Symbole", i: <Ic.Symbole />, active: true },
  { l: "Text", i: <Ic.TextNav /> },
  { l: "Bilder", i: <Ic.Bilder /> },
  { l: "Ikone", i: <Ic.Ikone /> },
  { l: "Aufkleber", i: <Ic.Sticker /> },
  { l: "Diagram...", i: <Ic.Chart /> },
  { l: "Widgets", i: <Puzzle size={20} strokeWidth={2.300} color="#444" /> },
];
const radios = ["Keine Füllung", "Mit Farbe füllen", "Mit Verlauf füllen", "Mit einfarbigem Verlauf füllen", "Mit Muster füllen", "Mit Bild oder Textur füllen"];

export default function App() {
  return (
    <Page>
      <Global />
      <TitleBar>
        <AppBlock>
          <Logo s={25} r={6} />
          <AppName>Wondershare EdrawMax</AppName>
          <ProBadge>Pro</ProBadge>
        </AppBlock>
        <DocTab><DocLogo />Grundschaltplan 2</DocTab>
        <DocTab $active><DocLogo />Halbleiterelektron<UnsavedDot /></DocTab>
        <NewTab><Plus size={16} strokeWidth={1.500} /></NewTab>
        <WindowArea>
          <Avatar>W<AvatarBadge /></Avatar>
          <WinBtn $ml={20}><Minus size={15} strokeWidth={1.500} /></WinBtn>
          <WinBtn $ml={19}><Square size={13} strokeWidth={1.500} /></WinBtn>
          <WinBtn $ml={18}><X size={16} strokeWidth={1.300} /></WinBtn>
          <WinBtn $ml={21}> </WinBtn>
        </WindowArea>
      </TitleBar>

      <MenuBar>
        <QuickArea>
          <QuickItem><ChevronLeft size={16} strokeWidth={1.400} /></QuickItem>
          <QuickItem $ml={16}><Ic.Hamburger /></QuickItem>
          <QuickItem $ml={6}>Datei</QuickItem>
          <VSep $ml={18} />
          <QuickItem $ml={14}><Undo2 size={16} strokeWidth={1.400} /></QuickItem>
          <QuickItem $ml={5}><Caret $c="#999" /></QuickItem>
          <QuickItem $ml={15} $dim><Redo2 size={16} strokeWidth={1.400} /></QuickItem>
          <QuickItem $ml={16}><Ic.Save /></QuickItem>
          <QuickItem $ml={16}><Printer size={18} strokeWidth={1.500} /></QuickItem>
          <QuickItem $ml={16}><Ic.ExportI /></QuickItem>
          <QuickItem $ml={5}><Caret $c="#999" /></QuickItem>
          <QuickItem $ml={18}><Ic.More /></QuickItem>
          <VSep $ml={20} />
        </QuickArea>
        <MenuTabs>
          <MenuTab>Start</MenuTab>
          <MenuTab>Einfügen</MenuTab>
          <MenuTab $active>Design</MenuTab>
          <MenuTab>Ansicht</MenuTab>
          <MenuTab>Symbole</MenuTab>
          <MenuTab>Erweitert</MenuTab>
          <MenuTab>AI<HotBadge>hot</HotBadge></MenuTab>
        </MenuTabs>
        <MenuRight>
          <MenuAction $ml={0}><Send size={15} strokeWidth={1.400} />Veröffentlichen</MenuAction>
          <MenuAction $ml={9}><Share2 size={15} strokeWidth={1.400} />Teilen</MenuAction>
          <MenuAction $ml={11}><Settings size={15} strokeWidth={1.400} />Optionen</MenuAction>
          <MenuAction $ml={11}><CircleHelp size={16} strokeWidth={1.300} /><Caret $c="#999" /><RedDot /></MenuAction>
          <MenuAction $ml={17}><ChevronUp size={14} strokeWidth={1.400} /></MenuAction>
        </MenuRight>
      </MenuBar>

      <Ribbon>
        <MagicButton>
          <Ic.Wand />
          <span>Verschönern</span>
          <span>per Mausklick <Caret /></span>
        </MagicButton>
        <Gallery>
          {thumbs.map((t, i) => (
            <ThumbBox key={i} $bg={t.bg} $selected={t.sel}><FlowThumb t={t} /></ThumbBox>
          ))}
          <GalleryMore><GalleryBar /><GalleryBar /><Caret /></GalleryMore>
        </Gallery>
        <QuickList>
          <QuickRow><Ic.Farbe />Farbe <Caret /></QuickRow>
          <QuickRow><Ic.Verb />Verbinder <Caret $ml={2} /></QuickRow>
          <QuickRow><Ic.TextS />Text <Caret /></QuickRow>
        </QuickList>
        <RibbonGroupA>
          {ribbonA.map(it => <RibbonCell key={it.l[0]} it={it} showCaret />)}
        </RibbonGroupA>
        <RibbonGroupB>
          <RibbonRow>
            {ribbonB.map(it => <RibbonCell key={it.l[0]} it={it} showCaret={!!it.caret} />)}
          </RibbonRow>
          <RibbonFooter>
            <FooterLabel>Seiteneinrichtung</FooterLabel>
            <FooterIcon><Ic.Expand /></FooterIcon>
          </RibbonFooter>
        </RibbonGroupB>
      </Ribbon>

      <Main>
        <NavRail>
          <NavCollapse><ChevronsLeft size={22} strokeWidth={2} /></NavCollapse>
          {navItems.map(n => (
            <NavItem key={n.l} $active={n.active}>
              <NavIcon $active={n.active}>{n.i}</NavIcon>
              {n.l}
            </NavItem>
          ))}
        </NavRail>

        <SymbolPanel>
          <PanelHead>
            <PanelTitleRow>
              <PanelTitle>Symbole</PanelTitle>
              <AiSymbol><Ic.Spark s={18} />AI Symbol</AiSymbol>
            </PanelTitleRow>
            <SearchBox><Search size={14} strokeWidth={2.400} />Symbole durchsuchen</SearchBox>
            <PanelTools>
              <PanelTool><ChevronGap><ChevronsUp size={12} strokeWidth={1.500} /></ChevronGap>Alle zuklappen</PanelTool>
              <PanelTool><GearGap><Settings size={15} strokeWidth={1.300} /></GearGap>Verwalten</PanelTool>
            </PanelTools>
          </PanelHead>
          <PanelScroll>
            <SymbolGrid $mt={-15}>
              {symbolRows.map((d, i) => (
                <SymbolThumb key={i}>
                  <svg width="40" height="40" viewBox="0 0 40 40" fill="none" stroke="#b4b5b8" strokeWidth="1.100"><path d={d} /></svg>
                </SymbolThumb>
              ))}
            </SymbolGrid>
            <GroupHead><Caret $c="#777" />Übertragungsweg</GroupHead>
            <SymbolGrid $mt={12}>
              {pathRow.map((d, i) => (
                <SymbolThumb key={i}>
                  <svg width="40" height="40" viewBox="0 0 40 40" fill="none" stroke="#bcbdc0" strokeWidth="1.100">
                    <path d={d} />
                    {i >= 2 && <path d="M3 3l3-3 3 3-3 3z" fill="#f5d547" stroke="#c7a92a" strokeWidth=".6" />}
                  </svg>
                </SymbolThumb>
              ))}
            </SymbolGrid>
            <PanelScrollThumb />
          </PanelScroll>
          <PanelFoot><PrimaryButton>Weitere Symbole</PrimaryButton></PanelFoot>
        </SymbolPanel>

        <CanvasArea>
          <TopRuler><TopRulerDraw /></TopRuler>
          <CanvasMiddle>
            <LeftRuler><LeftRulerDraw /></LeftRuler>
            <Viewport>
              <CanvasLines />
              <AiFloat>
                <Ic.Wand c="#7a5cf5" s={24} />
                <AiSep />
                <Ic.Spark c="#4f5cf8" s={24} f />
              </AiFloat>
            </Viewport>
            <VGutter><VThumb /></VGutter>
          </CanvasMiddle>
          <HGutter><HThumb /></HGutter>
          <PaletteRow>
            <PaletteIcon><Ic.PaintDark /><Caret $c="#777" /></PaletteIcon>
            {swatches.map((c, i) => <Swatch key={i} $c={c} />)}
          </PaletteRow>
        </CanvasArea>

        <RightRail>
          <RailCollapse><ChevronsRight size={20} strokeWidth={2} /></RailCollapse>
          <RailActive><Ic.Paint /></RailActive>
          <RailHelp><CircleHelp size={20} strokeWidth={2} /></RailHelp>
          <RailGear><Settings size={19} strokeWidth={2} /></RailGear>
        </RightRail>
        <PropsPanel>
          <PropsTabs>
            <PropsTab $active $w={85}>Füllen</PropsTab>
            <PropsTab $w={68}>Linie</PropsTab>
            <PropsTab $w={60}>Schatten</PropsTab>
          </PropsTabs>
          <RadioList>
            {radios.map((r, i) => (
              <RadioRow key={r}><RadioDot $on={i === 0} />{r}</RadioRow>
            ))}
          </RadioList>
        </PropsPanel>
      </Main>

      <StatusBar>
        <StatusCell $w={49} $pl={19}><Ic.SideToggle /></StatusCell>
        <StatusCell $w={130} $pl={17}>Seite-1<StatusGap $w={56} /><Caret $c="#777" /></StatusCell>
        <StatusCell $w={41} $jc="center"><Plus size={15} strokeWidth={1.400} /></StatusCell>
        <StatusCell $w={73} $jc="center"><StatusCurrent>Seite-1</StatusCurrent></StatusCell>
        <StatusSpacer />
        <StatusCell $w={137} $pl={8}><StatusCount>Anzahl an Formen: 111</StatusCount></StatusCell>
        <StatusCell $w={152} $pl={11}>
          <Layers size={17} strokeWidth={1.400} /><StatusGap $w={4} /><Caret $c="#999" /><StatusGap $w={13} />
          <Ic.Focus /><StatusGap $w={10} />Fokus<StatusGap $w={11} /><CirclePlay size={18} strokeWidth={1.200} />
        </StatusCell>
        <StatusCell $w={224} $pl={10}>
          <Minus size={14} strokeWidth={1.400} /><StatusGap $w={9} />
          <ZoomTrack><ZoomFill /><ZoomKnob /></ZoomTrack>
          <StatusGap $w={8} /><Plus size={14} strokeWidth={1.400} /><StatusGap $w={19} />85%<StatusGap $w={12} /><Caret $c="#999" />
        </StatusCell>
        <StatusCell $w={76} $pl={13} $last>
          <Ic.FitPage /><StatusGap $w={17} /><Ic.FitWidth />
        </StatusCell>
      </StatusBar>

      <Dialog>
        <DialogHead>
          <Logo s={16} r={3} />
          Exportieren
          <DialogClose><X size={16} strokeWidth={1.200} /></DialogClose>
        </DialogHead>
        <DialogBody>
          <ExportList>
            {formats.map(f => (
              <ExportItem key={f.n} $active={f.active}>
                <FileIcon a={f.a} b={f.b} c={f.c} l={f.l} />{f.n}
              </ExportItem>
            ))}
            <SendHead>Senden</SendHead>
            <SendItem><Ic.Mail />E-Mail senden</SendItem>
          </ExportList>
          <FormCol>
            <FieldLabel>Speicherort:</FieldLabel>
            <PathRow><PathText>C:/Users/ws/Documents</PathText><Ghost>Browsen</Ghost></PathRow>
            <FieldLabel $mt={17}>Dateiname:</FieldLabel>
            <TextField>Halbleiterelektron</TextField>
            <FieldLabel $mt={17}>Exportformat:</FieldLabel>
            <SelectField>JPG<Caret $c="#999" /></SelectField>
            <FieldLabel $mt={17}>Exportbereich:</FieldLabel>
            <SelectField>Aktuelle Seite<Caret $c="#999" /></SelectField>
            <DashLine />
            <FieldLabel $mt={17}>Exportqualität:</FieldLabel>
            <ChoiceRow>
              <Choice $w={72}>Normal</Choice>
              <Choice $w={49}>HD</Choice>
              <Choice $w={77} $active>Ultra HD<ChoiceTick><Check size={10} strokeWidth={3} /></ChoiceTick></Choice>
              <Choice $w={83}>Anpassen</Choice>
            </ChoiceRow>
            <FieldLabel $mt={17}>Wasserzeicheneinstellungen:</FieldLabel>
            <ChoiceRow>
              <Choice $w={79}>Standard</Choice>
              <Choice $w={141} $active>Keine Wasserzeichen<ChoiceTick><Check size={10} strokeWidth={3} /></ChoiceTick></Choice>
            </ChoiceRow>
            <FieldLabel $mt={17}>Andere Einstellungen:</FieldLabel>
            <CheckRow $mt={13}>
              <CheckItem $w={163}><CheckBox />Hintergrund entfernen</CheckItem>
              <CheckItem><CheckBox />Ränder entfernen</CheckItem>
            </CheckRow>
            <CheckRow $mt={22}>
              <CheckItem><CheckBox $on><Check size={11} strokeWidth={3} /></CheckBox>Gitternetzlinien entfernen</CheckItem>
            </CheckRow>
            <ExportButton />
          </FormCol>
          <PreviewPane><Preview /></PreviewPane>
        </DialogBody>
      </Dialog>
    </Page>
  );
}
